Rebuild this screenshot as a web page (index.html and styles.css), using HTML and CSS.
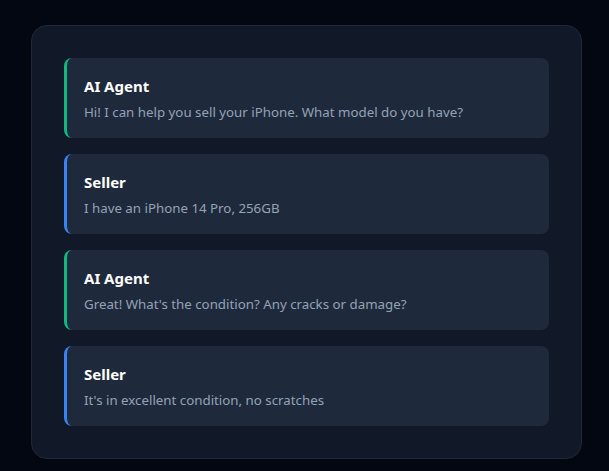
FILE: index.html
```html
<!DOCTYPE html>
<html>
<head>
<meta charset="utf-8">
<link rel="stylesheet" href="styles.css">
</head>
<body>
<div class="panel">
  <div class="msg agent">
    <div class="who">AI Agent</div>
    <div class="text">Hi! I can help you sell your iPhone. What model do you have?</div>
  </div>
  <div class="msg seller">
    <div class="who">Seller</div>
    <div class="text">I have an iPhone 14 Pro, 256GB</div>
  </div>
  <div class="msg agent">
    <div class="who">AI Agent</div>
    <div class="text">Great! What's the condition? Any cracks or damage?</div>
  </div>
  <div class="msg seller">
    <div class="who">Seller</div>
    <div class="text">It's in excellent condition, no scratches</div>
  </div>
</div>
</body>
</html>
```
FILE: styles.css
```css
html, body {
  margin: 0;
  background: #030712;
}
body {
  padding: 25px 0 0 31px;
  font-family: "Noto Sans", "Open Sans", sans-serif;
}
.panel {
  width: 551px;
  box-sizing: border-box;
  background: #111827;
  border: 1px solid #1f2937;
  border-radius: 16px;
  padding: 32px;
  display: flex;
  flex-direction: column;
  gap: 16px;
}
.msg {
  height: 80px;
  box-sizing: border-box;
  background: #1e293b;
  border-radius: 8px;
  border-left: 3px solid #10b981;
  padding: 2px 17px 0;
  display: flex;
  flex-direction: column;
  justify-content: center;
  gap: 6px;
}
.msg.seller {
  border-left-color: #3b82f6;
}
.who {
  color: #ffffff;
  font-weight: 700;
  font-size: 15px;
  line-height: 20px;
}
.text {
  color: #94a3b8;
  font-size: 13.3px;
  line-height: 20px;
}
```
